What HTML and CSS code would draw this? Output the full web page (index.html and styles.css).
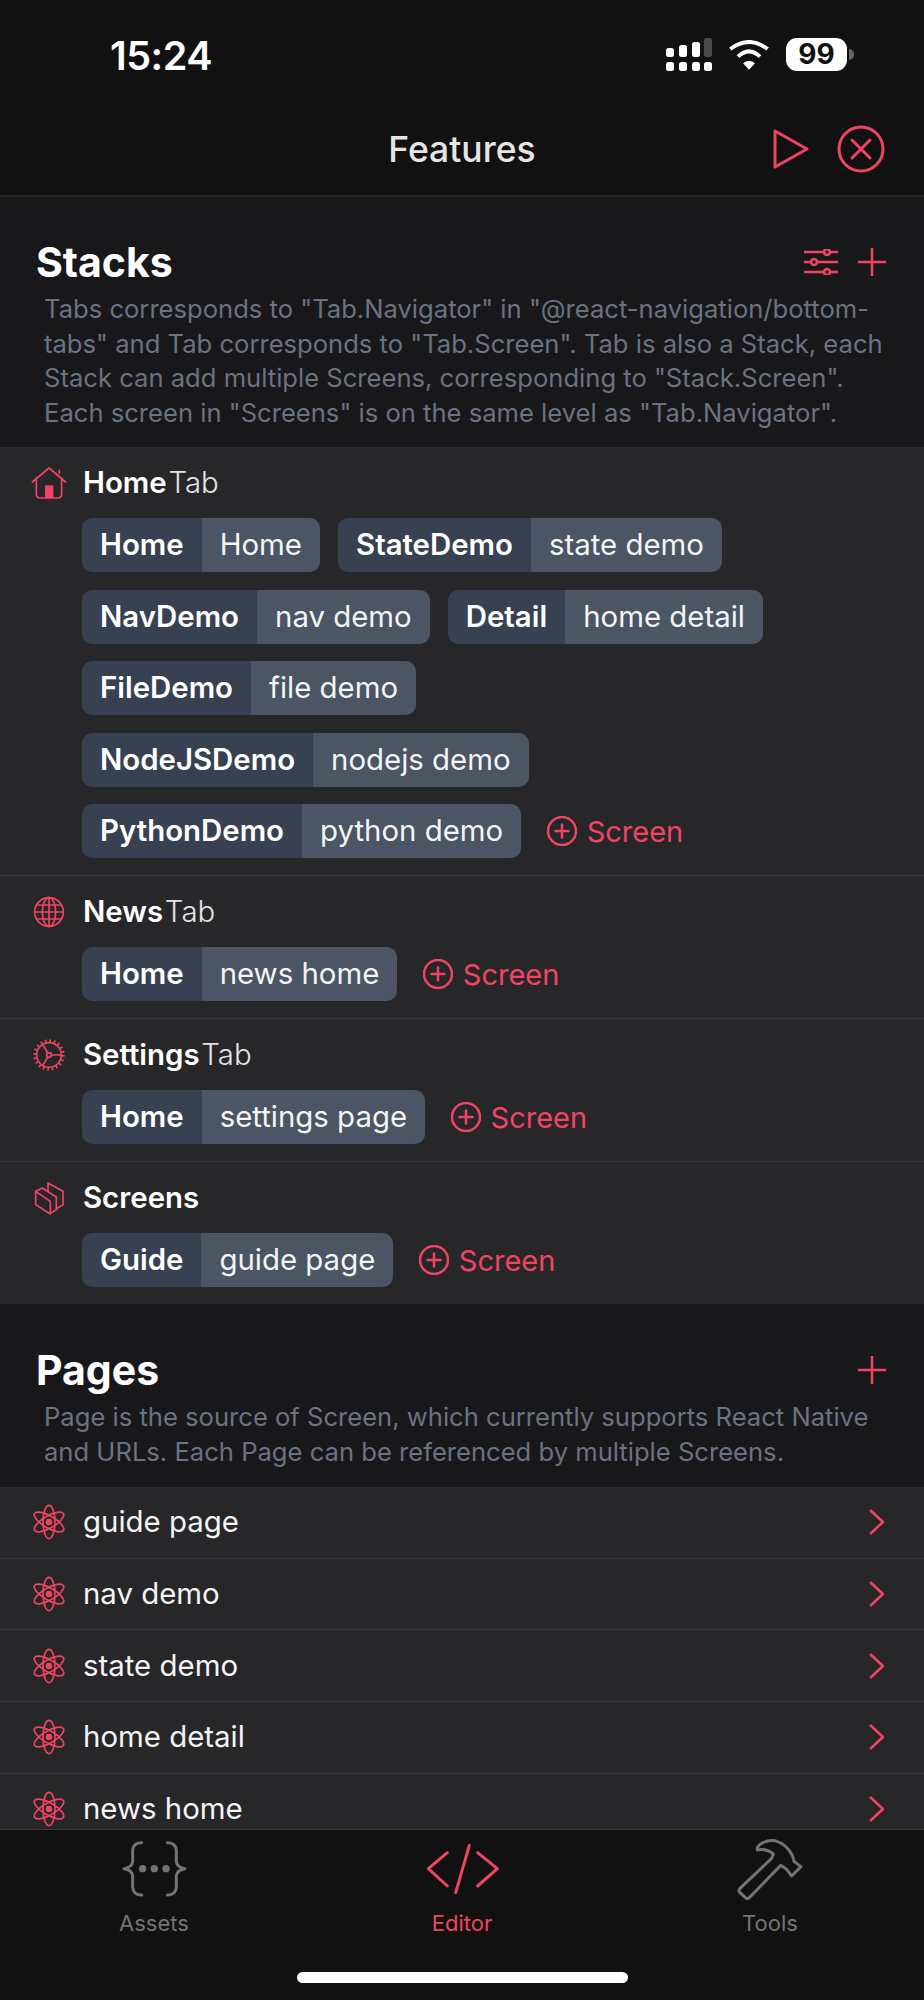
FILE: index.html
```html
<!DOCTYPE html>
<html lang="en">
<head>
<meta charset="utf-8">
<title>Features</title>
<link rel="stylesheet" href="styles.css">
</head>
<body>
<div class="app">
  <header class="top">
    <div class="status">
      <span class="time">15:24</span>
      <div class="status-icons">
        <svg class="signal" viewBox="0 0 46 33">
          <rect x="0" y="10" width="8" height="9" rx="2.5"/><rect x="13" y="7" width="8" height="12" rx="2.5"/><rect x="26" y="4" width="8" height="15" rx="2.5"/><rect class="dim" x="38" y="0" width="8" height="19" rx="2.5"/>
          <rect x="0" y="24" width="8" height="9" rx="2.5"/><rect x="13" y="24" width="8" height="9" rx="2.5"/><rect x="26" y="24" width="8" height="9" rx="2.5"/><rect x="38" y="24" width="8" height="9" rx="2.5"/>
        </svg>
        <svg class="wifi" viewBox="0 0 126 90">
          <path class="wifi-arc" d="M7 27Q63 -15 119 27"/><path class="wifi-arc" d="M30 50Q63 18 96 50"/><path class="wifi-dot" d="M45 70Q63 55 81 70L63 89Z"/>
        </svg>
        <div class="battery"><span class="battery-body">99</span><span class="battery-nub"></span></div>
      </div>
    </div>
    <nav class="nav">
      <span></span>
      <h1 class="nav-title">Features</h1>
      <div class="nav-actions">
        <svg class="ico-play" viewBox="0 0 36 40"><path d="M2 2L34 20L2 38Z"/></svg>
        <svg class="ico-close" viewBox="0 0 48 48"><circle cx="24" cy="24" r="22"/><path d="M15 15L33 33M33 15L15 33"/></svg>
      </div>
    </nav>
  </header>

  <main class="scroll">
    <section class="head">
      <div class="head-row">
        <h2 class="head-title">Stacks</h2>
        <div class="head-actions">
          <svg class="ico-sliders" viewBox="0 0 34 26"><path d="M0 3H20M26 3H34M0 13H7M13 13H34M0 23H20M26 23H34"/><circle cx="23" cy="3" r="3"/><circle cx="10" cy="13" r="3"/><circle cx="23" cy="23" r="3"/></svg>
          <svg class="ico-plus" viewBox="0 0 28 28"><path d="M14 0V28M0 14H28"/></svg>
        </div>
      </div>
      <p class="desc">Tabs corresponds to "Tab.Navigator" in "@react-navigation/bottom-tabs" and Tab corresponds to "Tab.Screen". Tab is also a Stack, each Stack can add multiple Screens, corresponding to "Stack.Screen". Each screen in "Screens" is on the same level as "Tab.Navigator".</p>
    </section>

    <div class="list">
      <div class="stack">
        <div class="stack-title">
          <svg class="row-ico" viewBox="-60 -60 120 120"><path d="M-50 -3L0 -45L50 -3M31 -29V-38M-38 -15V33Q-38 45 -26 45H26Q38 45 38 33V-15"/><rect class="solid" x="-12" y="7" width="25" height="38"/></svg>
          <span class="stack-name"><b>Home</b> <span class="thin">Tab</span></span>
        </div>
        <div class="chips">
          <div class="chip"><b>Home</b><span>Home</span></div>
          <div class="chip"><b>StateDemo</b><span>state demo</span></div>
          <div class="chip"><b>NavDemo</b><span>nav demo</span></div>
          <div class="chip"><b>Detail</b><span>home detail</span></div>
          <div class="chip"><b>FileDemo</b><span>file demo</span></div>
          <div class="chip"><b>NodeJSDemo</b><span>nodejs demo</span></div>
          <div class="chip"><b>PythonDemo</b><span>python demo</span></div>
          <div class="add"><svg class="ico-add" viewBox="0 0 30 30"><circle cx="15" cy="15" r="14"/><path d="M8.500 15H21.500M15 8.500V21.500"/></svg>Screen</div>
        </div>
      </div>

      <div class="stack">
        <div class="stack-title">
          <svg class="row-ico" viewBox="-60 -60 120 120"><circle cx="0" cy="0" r="43"/><ellipse cx="0" cy="0" rx="20" ry="43"/><path d="M0 -43V43M-43 0H43M-37 -21H37M-37 21H37"/></svg>
          <span class="stack-name"><b>News</b> <span class="thin">Tab</span></span>
        </div>
        <div class="chips">
          <div class="chip"><b>Home</b><span>news home</span></div>
          <div class="add"><svg class="ico-add" viewBox="0 0 30 30"><circle cx="15" cy="15" r="14"/><path d="M8.500 15H21.500M15 8.500V21.500"/></svg>Screen</div>
        </div>
      </div>

      <div class="stack">
        <div class="stack-title">
          <svg class="row-ico" viewBox="-60 -60 120 120"><circle cx="0" cy="0" r="37"/><circle class="teeth" cx="0" cy="0" r="43"/><circle cx="0" cy="0" r="7"/><path d="M7 0H37M-3.500 -6L-19 -32M-3.500 6L-19 32"/></svg>
          <span class="stack-name"><b>Settings</b> <span class="thin">Tab</span></span>
        </div>
        <div class="chips">
          <div class="chip"><b>Home</b><span>settings page</span></div>
          <div class="add"><svg class="ico-add" viewBox="0 0 30 30"><circle cx="15" cy="15" r="14"/><path d="M8.500 15H21.500M15 8.500V21.500"/></svg>Screen</div>
        </div>
      </div>

      <div class="stack">
        <div class="stack-title">
          <svg class="row-ico" viewBox="-60 -60 120 120"><path class="pages-ico" d="M-40 -20L4 10V48L-40 20ZM-40 -20L-20 -30L22 -3V35L4 46M-3 -20V-45L42 -20V20L22 33"/></svg>
          <span class="stack-name"><b>Screens</b></span>
        </div>
        <div class="chips">
          <div class="chip"><b>Guide</b><span>guide page</span></div>
          <div class="add"><svg class="ico-add" viewBox="0 0 30 30"><circle cx="15" cy="15" r="14"/><path d="M8.500 15H21.500M15 8.500V21.500"/></svg>Screen</div>
        </div>
      </div>
    </div>

    <section class="head head-pages">
      <div class="head-row">
        <h2 class="head-title">Pages</h2>
        <div class="head-actions">
          <svg class="ico-plus" viewBox="0 0 28 28"><path d="M14 0V28M0 14H28"/></svg>
        </div>
      </div>
      <p class="desc">Page is the source of Screen, which currently supports React Native and URLs. Each Page can be referenced by multiple Screens.</p>
    </section>

    <div class="list">
      <div class="page-row">
        <svg class="row-ico" viewBox="-60 -60 120 120"><ellipse rx="18" ry="50"/><ellipse rx="18" ry="50" transform="rotate(60)"/><ellipse rx="18" ry="50" transform="rotate(120)"/><circle class="solid" r="10"/></svg>
        <span class="page-name">guide page</span>
        <svg class="ico-chev" viewBox="0 0 18 28"><path d="M2 2L15 14L2 26"/></svg>
      </div>
      <div class="page-row">
        <svg class="row-ico" viewBox="-60 -60 120 120"><ellipse rx="18" ry="50"/><ellipse rx="18" ry="50" transform="rotate(60)"/><ellipse rx="18" ry="50" transform="rotate(120)"/><circle class="solid" r="10"/></svg>
        <span class="page-name">nav demo</span>
        <svg class="ico-chev" viewBox="0 0 18 28"><path d="M2 2L15 14L2 26"/></svg>
      </div>
      <div class="page-row">
        <svg class="row-ico" viewBox="-60 -60 120 120"><ellipse rx="18" ry="50"/><ellipse rx="18" ry="50" transform="rotate(60)"/><ellipse rx="18" ry="50" transform="rotate(120)"/><circle class="solid" r="10"/></svg>
        <span class="page-name">state demo</span>
        <svg class="ico-chev" viewBox="0 0 18 28"><path d="M2 2L15 14L2 26"/></svg>
      </div>
      <div class="page-row">
        <svg class="row-ico" viewBox="-60 -60 120 120"><ellipse rx="18" ry="50"/><ellipse rx="18" ry="50" transform="rotate(60)"/><ellipse rx="18" ry="50" transform="rotate(120)"/><circle class="solid" r="10"/></svg>
        <span class="page-name">home detail</span>
        <svg class="ico-chev" viewBox="0 0 18 28"><path d="M2 2L15 14L2 26"/></svg>
      </div>
      <div class="page-row">
        <svg class="row-ico" viewBox="-60 -60 120 120"><ellipse rx="18" ry="50"/><ellipse rx="18" ry="50" transform="rotate(60)"/><ellipse rx="18" ry="50" transform="rotate(120)"/><circle class="solid" r="10"/></svg>
        <span class="page-name">news home</span>
        <svg class="ico-chev" viewBox="0 0 18 28"><path d="M2 2L15 14L2 26"/></svg>
      </div>
    </div>
  </main>

  <footer class="tabbar">
    <div class="tab">
      <svg class="tab-ico" viewBox="12 0 300 210"><path d="M125 38Q100 38 98 60V95Q96 112 72 116Q96 120 98 137V172Q100 195 125 195M202 38Q227 38 229 60V95Q231 112 255 116Q231 120 229 137V172Q227 195 202 195"/><circle class="dot" cx="128" cy="116" r="11"/><circle class="dot" cx="163" cy="116" r="11"/><circle class="dot" cx="198" cy="116" r="11"/></svg>
      <span class="tab-label">Assets</span>
    </div>
    <div class="tab tab-on">
      <svg class="tab-ico" viewBox="6 0 300 210"><path d="M112 68L55 116L112 168M203 68L262 116L203 168M178 46L137 188"/></svg>
      <span class="tab-label">Editor</span>
    </div>
    <div class="tab">
      <svg class="tab-ico" viewBox="0 0 300 210"><path d="M112 52Q128 30 165 32Q200 42 218 78L222 94L243 110L215 138L200 118L182 106L88 203Q82 208 76 203L60 188Q54 182 60 175L155 85L160 72Q140 55 112 60Z"/></svg>
      <span class="tab-label">Tools</span>
    </div>
    <div class="home-bar"></div>
  </footer>
</div>
</body>
</html>
```

FILE: styles.css
```css
* { box-sizing: border-box; }
html, body { margin: 0; padding: 0; background: #111; }
body { font-family: Inter, "Noto Sans", sans-serif; color: #fff; }
h1, h2, p { margin: 0; }
svg { display: block; flex: none; fill: none; stroke: #f04462; stroke-width: 3; stroke-linecap: round; stroke-linejoin: round; }

.app { width: 924px; height: 2000px; display: flex; flex-direction: column; overflow: hidden; background: #18181b; }

.top { background: #111; border-bottom: 2px solid #27272a; flex: none; }
.status { height: 103px; padding: 36px 70px 0 110px; display: flex; justify-content: space-between; align-items: flex-start; }
.time { font-size: 39.500px; line-height: 40px; font-weight: 600; letter-spacing: -0.5px; }
.status-icons { display: flex; align-items: center; gap: 16px; padding-top: 2px; }
.signal { width: 46px; height: 33px; fill: #fff; stroke: none; }
.signal .dim { fill: #4a4a4a; }
.wifi { width: 42px; height: 30px; stroke: #fff; }
.wifi-arc { stroke: #fff; stroke-width: 12; stroke-linecap: butt; }
.wifi-dot { fill: #fff; stroke: none; }
.battery { display: flex; align-items: center; gap: 2px; }
.battery-body { width: 61px; height: 33px; background: #fff; border-radius: 11px; color: #111; font-size: 28px; line-height: 33px; font-weight: 700; text-align: center; }
.battery-nub { width: 5px; height: 11px; background: #666; border-radius: 0 5px 5px 0; }

.nav { height: 92px; display: grid; grid-template-columns: 1fr auto 1fr; align-items: center; }
.nav-title { padding-top: 2px; font-size: 35.500px; line-height: 44px; font-weight: 500; color: #e5e5e5; }
.nav-actions { display: flex; justify-content: flex-end; align-items: center; gap: 28px; padding-right: 39px; }
.ico-play { width: 36px; height: 40px; }
.ico-close { width: 48px; height: 48px; }

.scroll { flex: 1; min-height: 0; overflow: hidden; }
.head { padding: 45px 38px 17px 36px; }
.head-pages { padding-top: 46px; padding-bottom: 18px; }
.head-row { display: flex; justify-content: space-between; align-items: center; height: 40px; }
.head-title { font-size: 41px; line-height: 40px; font-weight: 700; }
.head-actions { display: flex; align-items: center; gap: 20px; }
.ico-sliders { width: 34px; height: 26px; stroke-width: 2.500; }
.ico-plus { width: 28px; height: 28px; stroke-width: 2.500; }
.desc { margin-top: 10px; padding: 0 0 0 8px; margin-right: -4px; font-size: 25.600px; line-height: 34.500px; color: #6b7280; }

.list { background: #27272a; }
.row-ico { width: 40px; height: 40px; }
.row-ico path, .row-ico circle, .row-ico ellipse { stroke-width: 5; }
.row-ico .solid { fill: #f04462; stroke: none; }
.row-ico .teeth { stroke-width: 8; stroke-dasharray: 5 8.500; stroke-linecap: butt; }

.stack { padding: 18px 82px 17px 29px; border-bottom: 1px solid #35353a; }
.stack:last-child { border-bottom: 0; }
.stack-title { height: 36px; display: flex; align-items: center; gap: 14px; }
.stack-name { font-size: 29.400px; line-height: 36px; word-spacing: -6.500px; }
.stack-name b { font-weight: 600; }
.thin { font-weight: 300; color: #e4e4e7; }
.chips { margin: 17px 0 0 53px; display: flex; flex-wrap: wrap; gap: 17.500px 18px; }
.chip { height: 54px; display: flex; border-radius: 10px; overflow: hidden; font-size: 29.400px; line-height: 54px; }
.chip b { padding: 0 18px; background: #374151; font-weight: 600; }
.chip span { padding: 0 18px; background: #4b5563; font-weight: 400; color: #f3f4f6; }
.add { height: 54px; margin-left: 7.500px; display: flex; align-items: center; gap: 10px; font-size: 29px; color: #f04462; }
.ico-add { width: 30px; height: 30px; stroke-width: 2.500; }

.page-row { height: 71.700px; padding: 0 38px 0 29px; display: flex; align-items: center; gap: 14px; border-bottom: 1px solid #35353a; }
.page-name { flex: 1; font-size: 29.400px; line-height: 36px; color: #f4f4f5; }
.ico-chev { width: 18px; height: 28px; stroke-width: 2.500; stroke-linecap: butt; }

.tabbar { position: relative; flex: none; height: 171px; display: grid; grid-template-columns: repeat(3, 1fr); align-content: start; justify-items: center; background: #111; border-top: 1px solid #3a3a3c; }
.tab { display: flex; flex-direction: column; align-items: center; }
.tab-ico { width: 100px; height: 70px; stroke: #737373; stroke-width: 9; }
.tab-ico .dot { fill: #737373; stroke: none; }
.tab-label { margin-top: 8px; font-size: 22px; line-height: 30px; color: #737373; }
.tab-on .tab-ico { stroke: #f04462; }
.tab-on .tab-label { color: #f04462; }
.home-bar { position: absolute; left: 297px; bottom: 17px; width: 331px; height: 11px; border-radius: 6px; background: #fff; }
```
